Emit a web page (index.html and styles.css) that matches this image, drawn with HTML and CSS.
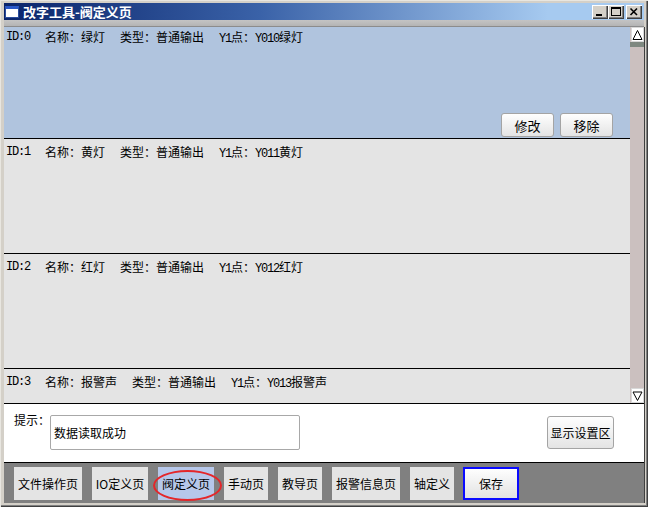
FILE: index.html
```html
<!DOCTYPE html>
<html lang="zh-CN">
<head>
<meta charset="utf-8">
<title>改字工具-阀定义页</title>
<link rel="stylesheet" href="styles.css">
</head>
<body>
<div class="window">
  <div class="titlebar">
    <span class="app-icon"></span>
    <span class="title">改字工具-阀定义页</span>
    <div class="controls">
      <span class="ctl">
        <svg width="16" height="14" viewBox="0 0 16 14"><rect x="4" y="9" width="6" height="2" fill="#000"/></svg>
      </span>
      <span class="ctl">
        <svg width="16" height="14" viewBox="0 0 16 14"><rect x="3.5" y="2.5" width="9" height="8" fill="none" stroke="#000"/><rect x="3" y="2" width="10" height="2" fill="#000"/></svg>
      </span>
      <span class="ctl ctl-close">
        <svg width="16" height="14" viewBox="0 0 16 14"><path d="M4.5 3.5 L11 10 M11 3.5 L4.5 10" stroke="#000" stroke-width="1.6"/></svg>
      </span>
    </div>
  </div>
  <div class="menu-band"></div>

  <div class="client">
    <div class="list-area">
      <div class="list">
        <div class="rows">
          <div class="row selected">
            <div class="info">
              <span class="asc">ID:0</span>
              <span>名称：绿灯</span>
              <span>类型：普通输出</span>
              <span><span class="asc">Y1</span>点：<span class="asc">Y010</span>绿灯</span>
            </div>
            <div class="row-actions">
              <button class="btn act">修改</button>
              <button class="btn act">移除</button>
            </div>
          </div>
          <div class="row">
            <div class="info">
              <span class="asc">ID:1</span>
              <span>名称：黄灯</span>
              <span>类型：普通输出</span>
              <span><span class="asc">Y1</span>点：<span class="asc">Y011</span>黄灯</span>
            </div>
          </div>
          <div class="row">
            <div class="info">
              <span class="asc">ID:2</span>
              <span>名称：红灯</span>
              <span>类型：普通输出</span>
              <span><span class="asc">Y1</span>点：<span class="asc">Y012</span>红灯</span>
            </div>
          </div>
          <div class="row">
            <div class="info">
              <span class="asc">ID:3</span>
              <span>名称：报警声</span>
              <span>类型：普通输出</span>
              <span><span class="asc">Y1</span>点：<span class="asc">Y013</span>报警声</span>
            </div>
          </div>
        </div>
      </div>
      <div class="vscroll">
        <span class="sb-btn">
          <svg width="13" height="14" viewBox="0 0 13 14"><polygon points="2,11.5 6.5,2.5 11,11.5" fill="none" stroke="#000"/></svg>
        </span>
        <span class="sb-thumb"></span>
        <span class="sb-track"></span>
        <span class="sb-btn">
          <svg width="13" height="14" viewBox="0 0 13 14"><polygon points="2,3 11,3 6.5,11.5" fill="none" stroke="#000"/></svg>
        </span>
      </div>
    </div>

    <div class="status-panel">
      <span class="hint-label">提示：</span>
      <div class="hint-box">数据读取成功</div>
      <button class="btn show-settings">显示设置区</button>
    </div>

    <div class="toolbar">
      <button class="tab w5">文件操作页</button>
      <button class="tab w4">IO定义页</button>
      <button class="tab w4 active">阀定义页<span class="ring"></span></button>
      <button class="tab w3">手动页</button>
      <button class="tab w3">教导页</button>
      <button class="tab w5">报警信息页</button>
      <button class="tab w3">轴定义</button>
      <button class="tab w4 save">保存</button>
    </div>
  </div>
</div>
</body>
</html>
```

FILE: styles.css
```css
* {
  box-sizing: border-box;
}

html,
body {
  margin: 0;
  padding: 0;
}

body {
  width: 648px;
  height: 507px;
  overflow: hidden;
  background: #d4d0c8;
  font-family: "Noto Sans CJK SC", sans-serif;
  font-size: 12px;
  color: #000;
}

button {
  font-family: inherit;
  color: #000;
  padding: 0;
  margin: 0;
}

/* window frame */
.window {
  width: 648px;
  height: 507px;
  padding: 3px 4px 4px 4px;
  background: #d4d0c8;
  box-shadow: inset 1px 1px 0 #e8e6e0, inset -1px -1px 0 #404040, inset -2px -2px 0 #808080;
  display: flex;
  flex-direction: column;
}

.titlebar {
  height: 17px;
  flex-shrink: 0;
  display: flex;
  align-items: center;
  background: linear-gradient(to right, #0a246a 0%, #3a62a8 40%, #a6caf0 85%, #a6caf0 100%);
}

.app-icon {
  width: 14px;
  height: 12px;
  margin-left: 1px;
  background: #fff;
  border: 1px solid #2a4c9c;
  border-top: 3px solid #2a58c8;
}

.title {
  margin-left: 4px;
  color: #fff;
  font-weight: bold;
  font-size: 13px;
  line-height: 17px;
  white-space: nowrap;
}

.controls {
  margin-left: auto;
  margin-right: 2px;
  display: flex;
}

.ctl {
  width: 16px;
  height: 14px;
  display: block;
  background: #d4d0c8;
  box-shadow: inset 1px 1px 0 #fff, inset -1px -1px 0 #404040, inset -2px -2px 0 #808080;
}

.ctl svg {
  display: block;
}

.ctl-close {
  margin-left: 2px;
}

.menu-band {
  height: 7px;
  flex-shrink: 0;
  background: linear-gradient(#c4c4c4, #b4b4b4);
  border-bottom: 1px solid #8c8c8c;
}

/* client area */
.client {
  height: 476px;
  display: flex;
  flex-direction: column;
  background: #fff;
  box-shadow: 1px 0 0 #404040;
}

.list-area {
  height: 377px;
  flex-shrink: 0;
  display: flex;
  border-bottom: 1px solid #000;
}

.list {
  width: 626px;
  height: 376px;
  overflow: hidden;
  background: #e4e4e4;
}

.rows {
  margin-top: -3px;
}

.row {
  height: 115px;
  padding: 6px 0 1px 2px;
  border-bottom: 1px solid #000;
  background: #e4e4e4;
  display: flex;
  flex-direction: column;
}

.row.selected {
  background: #b0c4de;
}

.info {
  display: flex;
  gap: 15px;
  line-height: 14px;
  white-space: nowrap;
}

.asc {
  font-family: "Liberation Mono", monospace;
  letter-spacing: -1.2px;
}

.row-actions {
  margin-top: auto;
  display: flex;
  justify-content: flex-end;
  gap: 6px;
  padding-right: 17px;
}

.btn {
  background: linear-gradient(#fefefe, #e4e4e4);
  border: 1px solid #a4a4a4;
  border-radius: 3px;
  font-size: 13px;
  line-height: 1;
}

.btn.act {
  width: 53px;
  height: 24px;
}

/* vertical scroll bar */
.vscroll {
  width: 14px;
  height: 376px;
  display: flex;
  flex-direction: column;
  background: #cbc0bf;
}

.sb-btn {
  width: 13px;
  height: 15px;
  margin-left: 1px;
  background: #fff;
  border: 1px solid #d8d8d8;
  flex-shrink: 0;
}

.sb-btn svg {
  display: block;
  margin: 0 0 0 -1px;
}

.sb-thumb {
  height: 5px;
  background: #7e8880;
  flex-shrink: 0;
}

.sb-track {
  flex: 1;
}

/* message panel */
.status-panel {
  height: 58px;
  flex-shrink: 0;
  display: flex;
  align-items: flex-start;
  padding: 9px 30px 0 10px;
  background: #fff;
}

.hint-label {
  width: 36px;
  line-height: 14px;
  white-space: nowrap;
}

.hint-box {
  width: 250px;
  height: 35px;
  margin-top: 2px;
  padding: 0 3px;
  border: 1px solid #a8a8a8;
  border-radius: 2px;
  display: flex;
  align-items: center;
  background: #fff;
}

.btn.show-settings {
  margin-left: auto;
  margin-top: 3px;
  width: 67px;
  height: 33px;
  font-size: 12px;
}

/* page tabs */
.toolbar {
  height: 41px;
  flex-shrink: 0;
  display: flex;
  gap: 10px;
  padding: 4px 0 0 10px;
  background: #808080;
  border-top: 1px solid #000;
}

.tab {
  position: relative;
  height: 33px;
  border: none;
  background: #e4e4e4;
  font-size: 12px;
  white-space: nowrap;
  flex-shrink: 0;
}

.tab.w3 { width: 44px; }
.tab.w4 { width: 56px; }
.tab.w5 { width: 68px; }

.tab.active {
  background: #b6c7ea;
}

.tab .ring {
  position: absolute;
  left: -5px;
  top: 3px;
  width: 69px;
  height: 31px;
  border: 2.5px solid #e4262a;
  border-radius: 50%;
}

.tab.save {
  margin-left: -1px;
  border: 2px solid #0a0aff;
  background: linear-gradient(#fefefe, #e2e2e2);
}
```
